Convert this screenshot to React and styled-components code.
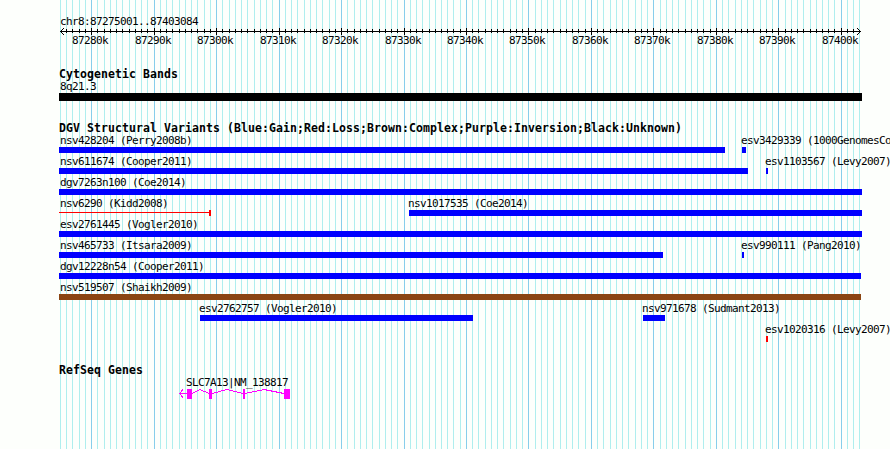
import React from "react";
import styled, { createGlobalStyle } from "styled-components";

const GlobalStyle = createGlobalStyle`
  html, body { margin: 0; padding: 0; background: #fdfffc; }
  body { overflow: hidden; }
`;

const LEFT = 59;
const FIRST_KB = 87275;
const LAST_KB = 87403;
const kbToX = (kb) => Math.round(60 + ((kb * 1000 - 87275001) * 800) / 128083);

const TICKS = Array.from({ length: LAST_KB - FIRST_KB + 1 }, (_, i) => {
  const kb = FIRST_KB + i;
  return { kb, x: kbToX(kb), major: kb % 10 === 0 };
});
const MAJOR = TICKS.filter((t) => t.major);

const Browser = styled.main`
  position: relative;
  box-sizing: border-box;
  width: 890px;
  height: 449px;
  padding-top: 15px;
  overflow: hidden;
  background: #fdfffc;
  color: #000;
  font-family: "DejaVu Sans Mono", monospace;
`;

const GridLines = styled.svg`
  position: absolute;
  inset: 0;
  shape-rendering: crispEdges;
`;

const Content = styled.div`
  position: relative;
  display: flex;
  flex-direction: column;
`;

const Label = styled.span`
  display: block;
  height: 12px;
  margin-left: ${(p) => p.$indent ?? 0}px;
  font-size: 11px;
  line-height: 12px;
  letter-spacing: -0.622px;
  white-space: pre;
`;

const RegionLabel = styled(Label)`
  height: 11px;
  margin: 1px 0 0 60px;
`;

const Axis = styled.svg`
  display: block;
  width: 890px;
  height: 8px;
  shape-rendering: crispEdges;
`;

const AxisLabels = styled.div`
  display: flex;
  padding-left: 72px;
  height: 12px;
`;

const AxisLabel = styled(Label)`
  flex: none;
  width: ${(p) => p.$width}px;
`;

const Track = styled.section`
  display: flex;
  flex-direction: column;
  margin-top: ${(p) => p.$gap}px;
`;

const TrackTitle = styled.h2`
  margin: 0 0 0 ${LEFT}px;
  height: 13px;
  font-size: 11.5px;
  font-weight: 700;
  line-height: 12px;
  letter-spacing: 0.077px;
  white-space: pre;
`;

const Row = styled.div`
  display: flex;
  height: 21px;
`;

const Feature = styled.div`
  flex: none;
  display: flex;
  flex-direction: column;
  width: ${(p) => p.$width}px;
  margin-left: ${(p) => p.$before}px;
`;

const Bar = styled.div`
  height: ${(p) => p.$height ?? 6}px;
  background: ${(p) => p.$color};
`;

const Bracket = styled.div`
  box-sizing: border-box;
  display: flex;
  align-items: flex-start;
  height: 6px;
  border-right: 2px solid #f00;

  &::before {
    content: "";
    flex: 1;
    height: 1px;
    margin-top: 2px;
    background: #f00;
  }
`;

const Gene = styled.svg`
  display: block;
  width: 111px;
  height: 11px;
  margin-left: 179px;
  shape-rendering: crispEdges;
`;

const BLUE = "#0000ff";
const RED = "#ff0000";
const BROWN = "#8b4513";

const ROWS = [
  [
    { name: "nsv428204 (Perry2008b)", from: 59, to: 725, color: BLUE },
    { name: "esv3429339 (1000GenomesConsortium)", from: 742, to: 746, color: BLUE },
  ],
  [
    { name: "nsv611674 (Cooper2011)", from: 59, to: 748, color: BLUE },
    { name: "esv1103567 (Levy2007)", from: 766, to: 768, color: BLUE },
  ],
  [{ name: "dgv7263n100 (Coe2014)", from: 59, to: 862, color: BLUE }],
  [
    { name: "nsv6290 (Kidd2008)", from: 59, to: 211, bracket: true },
    { name: "nsv1017535 (Coe2014)", from: 409, to: 862, color: BLUE },
  ],
  [{ name: "esv2761445 (Vogler2010)", from: 59, to: 862, color: BLUE }],
  [
    { name: "nsv465733 (Itsara2009)", from: 59, to: 663, color: BLUE },
    { name: "esv990111 (Pang2010)", from: 742, to: 744, color: BLUE },
  ],
  [{ name: "dgv12228n54 (Cooper2011)", from: 59, to: 861, color: BLUE }],
  [{ name: "nsv519507 (Shaikh2009)", from: 59, to: 861, color: BROWN }],
  [
    { name: "esv2762757 (Vogler2010)", from: 200, to: 473, color: BLUE },
    { name: "nsv971678 (Sudmant2013)", from: 643, to: 665, color: BLUE },
  ],
  [{ name: "esv1020316 (Levy2007)", from: 766, to: 768, color: RED }],
];

function FeatureRow({ items }) {
  return (
    <Row>
      {items.map((f, i) => (
        <Feature
          key={f.name}
          $width={f.to - f.from}
          $before={f.from - (i ? items[i - 1].to : 0)}
        >
          <Label $indent={f.from === LEFT ? 1 : -1}>{f.name}</Label>
          {f.bracket ? <Bracket /> : <Bar $color={f.color} />}
        </Feature>
      ))}
    </Row>
  );
}

export default function App() {
  return (
    <Browser>
      <GlobalStyle />
      <GridLines width="890" height="449">
        {TICKS.map((t) => (
          <rect key={t.kb} x={t.x} y="0" width="1" height="449" fill={t.major ? "#87ceeb" : "#afeeee"} />
        ))}
      </GridLines>
      <Content>
        <RegionLabel>chr8:87275001..87403084</RegionLabel>
        <Axis viewBox="0 27 890 8">
          <rect x="60" y="31" width="801" height="1" />
          {TICKS.slice(1, -1).map((t) => (
            <rect
              key={t.kb}
              x={t.x}
              y={t.major ? 28 : 29}
              width="1"
              height={t.major ? 7 : 4}
            />
          ))}
          <path d="M60 31h1v1h-1zM61 30h1v1h-1zM62 29h1v1h-1zM63 28h1v1h-1zM61 32h1v1h-1zM62 33h1v1h-1zM63 34h1v1h-1z" />
          <path d="M860 31h1v1h-1zM859 30h1v1h-1zM858 29h1v1h-1zM857 28h1v1h-1zM859 32h1v1h-1zM858 33h1v1h-1zM857 34h1v1h-1z" />
        </Axis>
        <AxisLabels>
          {MAJOR.map((t, i) => (
            <AxisLabel key={t.kb} $width={(MAJOR[i + 1]?.x ?? t.x + 36) - t.x}>
              {t.kb}k
            </AxisLabel>
          ))}
        </AxisLabels>
        <Track $gap={21}>
          <TrackTitle>Cytogenetic Bands</TrackTitle>
          <Feature $before={59} $width={803}>
            <Label $indent={1}>8q21.3</Label>
            <Bar $color="#000" $height={8} />
          </Feature>
        </Track>
        <Track $gap={21}>
          <TrackTitle>DGV Structural Variants (Blue:Gain;Red:Loss;Brown:Complex;Purple:Inversion;Black:Unknown)</TrackTitle>
          {ROWS.map((items) => (
            <FeatureRow key={items[0].name} items={items} />
          ))}
        </Track>
        <Track $gap={19}>
          <TrackTitle>RefSeq Genes</TrackTitle>
          <Feature $before={186} $width={104}>
            <Label>SLC7A13|NM_138817</Label>
          </Feature>
          <Gene viewBox="179 389 111 11">
            <g fill="none" stroke="#ff00ff" strokeWidth="1">
              <path d="M179 393.5H187M183 389.5L179.5 393.5L183 397.5" />
              <path d="M192 393.5L200 389.5L209 393.5" />
              <path d="M212 393.5L227 389.5L243 393.5" />
              <path d="M245 393.5L264 389.5L284 393.5" />
            </g>
            <g fill="#ff00ff">
              <rect x="187" y="389" width="5" height="10" />
              <rect x="209" y="389" width="3" height="10" />
              <rect x="243" y="389" width="2" height="10" />
              <rect x="284" y="389" width="6" height="10" />
            </g>
          </Gene>
        </Track>
      </Content>
    </Browser>
  );
}
